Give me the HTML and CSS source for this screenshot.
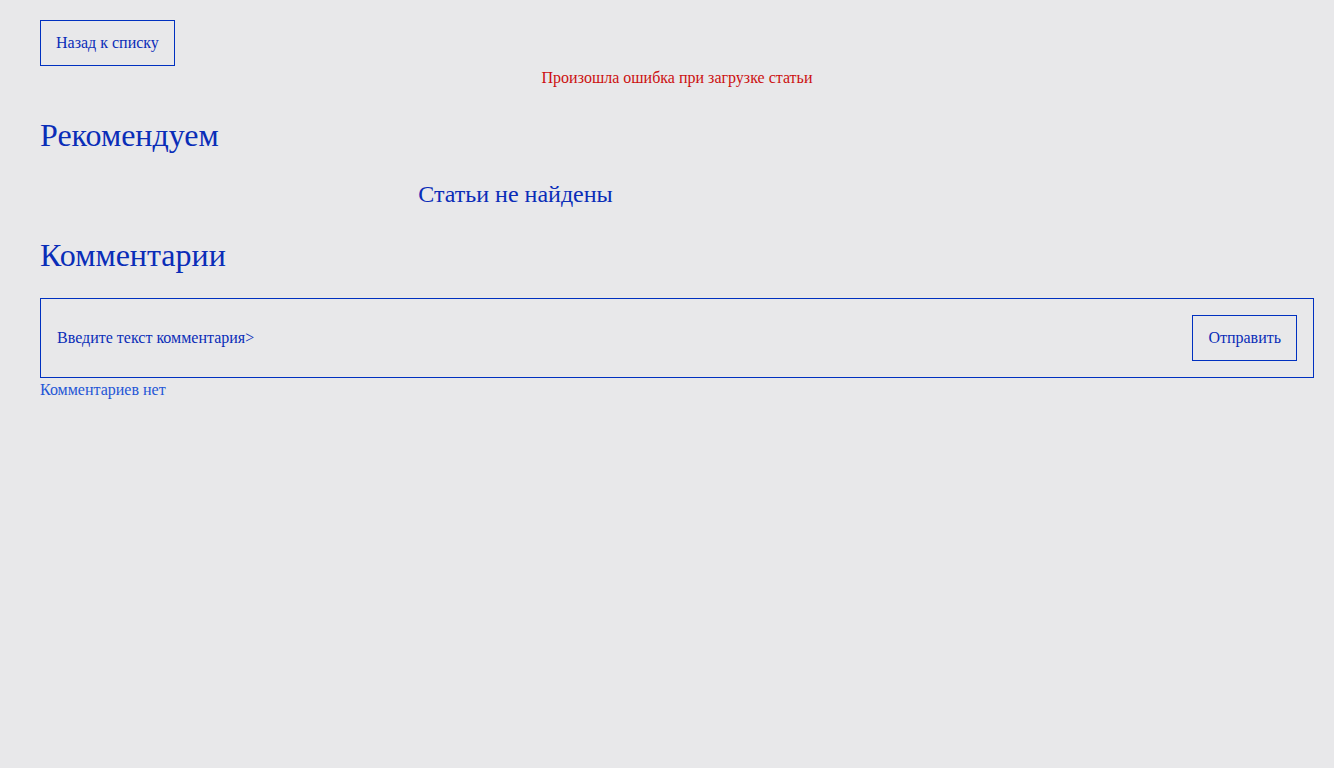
FILE: index.html
```html
<!DOCTYPE html>
<html lang="ru">
<head>
<meta charset="utf-8">
<title>Статья</title>
<link rel="stylesheet" href="styles.css">
</head>
<body>
<main class="page">
  <button class="btn back-btn" type="button">Назад к списку</button>
  <p class="error">Произошла ошибка при загрузке статьи</p>
  <h1 class="section-title">Рекомендуем</h1>
  <div class="recommend">
    <p class="empty">Статьи не найдены</p>
  </div>
  <h1 class="section-title comments-title">Комментарии</h1>
  <form class="comment-form">
    <input class="comment-input" type="text" placeholder="Введите текст комментария&gt;">
    <button class="btn" type="button">Отправить</button>
  </form>
  <p class="no-comments">Комментариев нет</p>
</main>
</body>
</html>
```

FILE: styles.css
```css
html, body {
  margin: 0;
  padding: 0;
  background: #e8e8ea;
}

body {
  font-family: "Liberation Serif", "Times New Roman", serif;
  font-size: 16px;
  color: #0a2db8;
}

.page {
  padding: 20px 20px 20px 40px;
  display: flex;
  flex-direction: column;
  align-items: flex-start;
}

.btn {
  font-family: "Liberation Serif", "Times New Roman", serif;
  font-size: 16px;
  line-height: 18.4px;
  color: #0a2db8;
  background: transparent;
  border: 1px solid #0030c0;
  padding: 13px 15px;
  margin: 0;
  cursor: pointer;
}

.error {
  align-self: stretch;
  text-align: center;
  color: #cc1010;
  margin: 3px 0 0;
  line-height: 18.4px;
}

.section-title {
  font-size: 32px;
  font-weight: normal;
  line-height: 36.8px;
  margin: 29px 0 0;
  color: #0a2db8;
}

.recommend {
  width: 951px;
  margin-top: 27.6px;
}

.empty {
  font-size: 24px;
  line-height: 27.6px;
  text-align: center;
  margin: 0;
  color: #0a2db8;
}

.comments-title {
  margin-top: 27.8px;
}

.comment-form {
  align-self: stretch;
  margin: 24.4px 0 0;
  border: 1px solid #0030c0;
  padding: 16px;
  display: flex;
  align-items: center;
  gap: 16px;
}

.comment-input {
  flex: 1;
  border: none;
  background: transparent;
  outline: none;
  padding: 0;
  font-family: "Liberation Serif", "Times New Roman", serif;
  font-size: 16px;
  color: #0a2db8;
}

.comment-input::placeholder {
  color: #0a2db8;
  opacity: 1;
}

.no-comments {
  margin: 3px 0 0;
  line-height: 18.4px;
  color: #2456d6;
}
```
